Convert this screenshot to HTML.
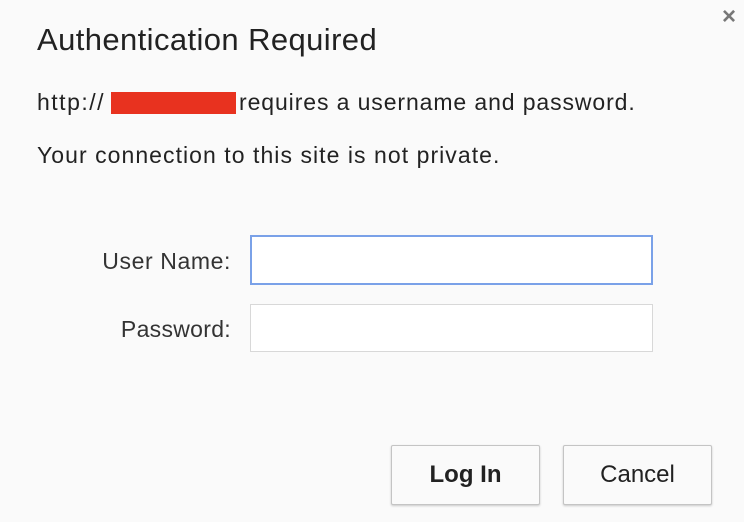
<!DOCTYPE html>
<html><head><meta charset="utf-8"><style>
html,body{margin:0;padding:0;}
body{width:744px;height:522px;background:#fafafa;position:relative;overflow:hidden;font-family:"Liberation Sans",sans-serif;color:#222;}
.a{position:absolute;white-space:nowrap;}
.inp{position:absolute;background:#fff;box-sizing:border-box;}
.btn{position:absolute;box-sizing:border-box;background:#fafafa;border:1px solid #c4c4c4;border-radius:2px;box-shadow:0 1px 2px rgba(0,0,0,.2);font-size:24px;text-align:center;line-height:58px;color:#222;}
</style></head><body>
<div class="a" style="left:722px;top:3px;font-size:24px;color:#777;font-weight:bold;">×</div>
<div class="a" style="left:37px;top:22px;font-size:31px;color:#222;letter-spacing:0.4px;">Authentication Required</div>
<div class="a" style="left:37px;top:89px;font-size:23px;letter-spacing:0.9px;"><span style="letter-spacing:1.5px">http://</span><span style="display:inline-block;width:125px;height:22px;background:#e8321f;vertical-align:-4px;margin:0 3px 0 6px;"></span>requires a username and password.</div>
<div class="a" style="left:37px;top:142px;font-size:23px;letter-spacing:1.05px;">Your connection to this site is not private.</div>
<div class="a" style="right:513px;top:248px;font-size:23px;color:#333;letter-spacing:0.6px;">User Name:</div>
<div class="a" style="right:513px;top:316px;font-size:23px;color:#333;letter-spacing:0.3px;">Password:</div>
<div class="inp" style="left:250px;top:235px;width:403px;height:50px;border:2px solid #7aa1e8;"></div>
<div class="inp" style="left:250px;top:304px;width:403px;height:48px;border:1px solid #d8d8d8;"></div>
<div class="btn" style="left:391px;top:445px;width:149px;height:60px;font-weight:bold;">Log In</div>
<div class="btn" style="left:563px;top:445px;width:149px;height:60px;">Cancel</div>
</body></html>
